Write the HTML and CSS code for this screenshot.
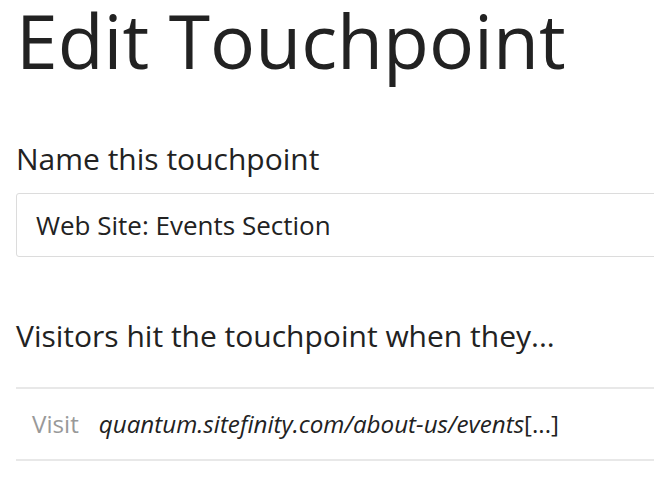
FILE: index.html
```html
<!DOCTYPE html>
<html lang="en">
<head>
<meta charset="utf-8">
<title>Edit Touchpoint</title>
<link rel="stylesheet" href="styles.css">
</head>
<body>
<main class="page">
  <h1 class="title">Edit Touchpoint</h1>
  <label class="field-label">Name this touchpoint</label>
  <div class="text-input">Web Site: Events Section</div>
  <h2 class="section-title">Visitors hit the touchpoint when they...</h2>
  <div class="rule-list">
    <div class="rule-row">
      <span class="rule-verb">Visit</span>
      <span class="rule-value"><em>quantum.sitefinity.com/about-us/events</em>[...]</span>
    </div>
  </div>
</main>
</body>
</html>
```
FILE: styles.css
```css
html, body {
  margin: 0;
  padding: 0;
  background: #fff;
  overflow: hidden;
}
body {
  font-family: "Open Sans", "Noto Sans", sans-serif;
  color: #222;
}
.page {
  padding: 0 0 0 16px;
  display: flex;
  flex-direction: column;
  align-items: flex-start;
}
.title {
  font-size: 75px;
  font-weight: 400;
  line-height: 80px;
  margin: 0;
  letter-spacing: 0;
}
.field-label {
  display: block;
  font-size: 30px;
  line-height: 40px;
  margin-top: 59px;
}
.text-input {
  box-sizing: border-box;
  margin-top: 14px;
  width: 700px;
  height: 64px;
  border: 1px solid #dcdcdc;
  border-radius: 3px;
  padding: 0 19px;
  font-size: 26px;
  line-height: 62px;
  color: #222;
}
.section-title {
  font-size: 30px;
  font-weight: 400;
  line-height: 40px;
  margin: 59px 0 0;
}
.rule-list {
  margin-top: 31px;
  width: 700px;
  border-top: 2px solid #e8e8e8;
  border-bottom: 2px solid #e8e8e8;
}
.rule-row {
  display: flex;
  gap: 20px;
  padding-left: 16px;
  font-size: 24.2px;
  line-height: 70px;
}
.rule-verb {
  color: #999;
}
.rule-value {
  color: #222;
}
.rule-value em {
  font-style: italic;
}
```
